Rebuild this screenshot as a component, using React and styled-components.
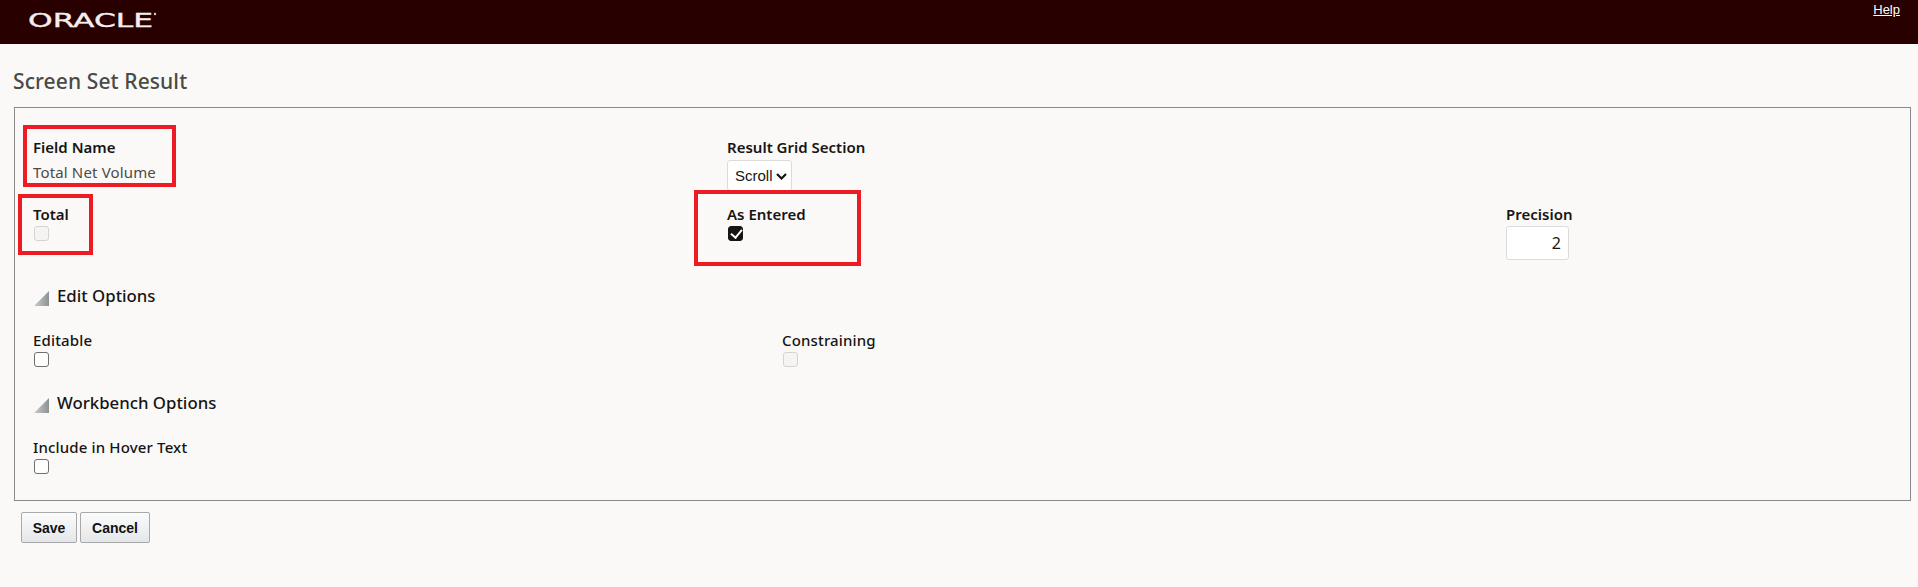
import React from "react";
import styled, { createGlobalStyle } from "styled-components";

const Global = createGlobalStyle`
  html, body { margin: 0; padding: 0; background: #fbf9f8; }
  body { font-family: "Noto Sans", "Open Sans", sans-serif; color: #161513; }
  * { box-sizing: border-box; }
`;

const Page = styled.div`
  position: relative;
  width: 1918px;
  height: 587px;
  background: #fbf9f8;
  overflow: hidden;
`;

const Header = styled.header`
  height: 44px;
  background: #290000;
  display: flex;
  justify-content: space-between;
  align-items: flex-start;
  padding: 0 18px 0 28px;
`;

const Logo = styled.svg`
  display: block;
  margin-top: 9px;
`;

const HelpLink = styled.a`
  font-family: "Liberation Sans", Arial, sans-serif;
  font-size: 13px;
  line-height: 15px;
  margin-top: 2px;
  color: #fff;
  text-decoration: underline;
`;

const Title = styled.h1`
  margin: 24px 0 0 13px;
  font-size: 21px;
  line-height: 26px;
  font-weight: 500;
  letter-spacing: 0.1px;
  color: #4a4a46;
`;

const Panel = styled.section`
  margin: 13px 7px 0 14px;
  height: 394px;
  border: 1px solid #8a8a8a;
  padding: 29px 18px 0;
`;

const Row = styled.div`
  display: grid;
  grid-template-columns: ${(p) => p.$cols};
  height: ${(p) => p.$h}px;
  padding-top: ${(p) => p.$top || 0}px;
`;

const Field = styled.div`
  display: flex;
  flex-direction: column;
  align-items: flex-start;
`;

const Label = styled.label`
  font-size: 15px;
  line-height: 20px;
  font-weight: ${(p) => (p.$strong ? 600 : 500)};
  letter-spacing: ${(p) => (p.$strong ? 0 : 0.15)}px;
  color: #161513;
`;

const StaticValue = styled.span`
  font-size: 15px;
  line-height: 20px;
  margin-top: 5px;
  letter-spacing: 0.15px;
  color: #4a4a46;
`;

const SelectBox = styled.select`
  appearance: none;
  width: 65px;
  height: 31px;
  margin-top: 3px;
  padding: 0 0 0 7px;
  border: 1px solid #dcdbd9;
  border-radius: 3px;
  background: #fff url("data:image/svg+xml,%3Csvg xmlns='http://www.w3.org/2000/svg' width='11' height='7' viewBox='0 0 11 7'%3E%3Cpath d='M1 1l4.5 4.5L10 1' fill='none' stroke='%23161513' stroke-width='2.2'/%3E%3C/svg%3E") no-repeat 48px 12px;
  color: #161513;
  font-family: "Liberation Sans", Arial, sans-serif;
  font-size: 15px;
`;

const CheckBox = styled.input.attrs({ type: "checkbox" })`
  appearance: none;
  position: relative;
  width: 15px;
  height: 15px;
  margin: 2px 0 0 1px;
  border-radius: 3px;
  border: 1px solid ${(p) => (p.disabled ? "#d5d4d2" : "#706f6c")};
  background: ${(p) => (p.disabled ? "#f5f4f2" : "#fff")};
  &:checked { background: #161513; border-color: #161513; }
  &:checked::after {
    content: "";
    position: absolute;
    left: 4px;
    top: 0px;
    width: 5px;
    height: 9px;
    border: solid #fff;
    border-width: 0 2.5px 2.5px 0;
    transform: rotate(40deg);
  }
`;

const NumberInput = styled.input`
  width: 63px;
  height: 34px;
  margin-top: 2px;
  padding: 0 7px 0 0;
  border: 1px solid #dcdbd9;
  border-radius: 3px;
  background: #fff;
  color: #161513;
  text-align: right;
  font-family: "Noto Sans", sans-serif;
  font-size: 16px;
`;

const SectionHead = styled.div`
  display: flex;
  align-items: center;
  gap: 8px;
  height: 24px;
  margin-left: 1px;
`;

const SectionTitle = styled.span`
  font-size: 16.8px;
  line-height: 24px;
  font-weight: 500;
  color: #161513;
`;

const ButtonBar = styled.div`
  display: flex;
  gap: 3px;
  margin: 11px 0 0 21px;
`;

const Button = styled.button`
  height: 31px;
  width: ${(p) => p.$w}px;
  padding: 0;
  border: 1px solid #a8a8a8;
  border-radius: 2px;
  background: linear-gradient(#fbfbfb, #e4e7ea);
  color: #111;
  font-family: "Liberation Sans", Arial, sans-serif;
  font-size: 14px;
  font-weight: 700;
`;

const Callout = styled.div`
  position: absolute;
  left: ${(p) => p.$x}px;
  top: ${(p) => p.$y}px;
  width: ${(p) => p.$w}px;
  height: ${(p) => p.$h}px;
  border: 4px solid #ed1c24;
  pointer-events: none;
`;

const Triangle = () => (
  <svg width="15" height="15" viewBox="0 0 15 15" style={{ marginTop: 5 }}>
    <defs>
      <linearGradient id="tri" x1="0" y1="0" x2="1" y2="0">
        <stop offset="0" stopColor="#c9cbcc" />
        <stop offset="1" stopColor="#8f9294" />
      </linearGradient>
    </defs>
    <polygon points="0,15 15,0 15,15" fill="url(#tri)" />
  </svg>
);

export default function App() {
  return (
    <Page>
      <Global />
      <Header>
        <Logo width="132" height="22" viewBox="0 0 132 22">
          <text x="0" y="18" fill="#f4eeee" stroke="#f4eeee" strokeWidth="0.4" fontFamily="DejaVu Sans, sans-serif" fontSize="20" textLength="125" lengthAdjust="spacingAndGlyphs">ORACLE</text>
          <circle cx="127" cy="5" r="1.2" fill="#d8cccc" />
        </Logo>
        <HelpLink href="#">Help</HelpLink>
      </Header>
      <Title>Screen Set Result</Title>
      <Panel>
        <Row $cols="694px 1fr" $h={67}>
          <Field>
            <Label $strong>Field Name</Label>
            <StaticValue>Total Net Volume</StaticValue>
          </Field>
          <Field>
            <Label $strong>Result Grid Section</Label>
            <SelectBox defaultValue="Scroll"><option>Scroll</option></SelectBox>
          </Field>
        </Row>
        <Row $cols="694px 779px 1fr" $h={80}>
          <Field>
            <Label $strong>Total</Label>
            <CheckBox disabled />
          </Field>
          <Field>
            <Label $strong>As Entered</Label>
            <CheckBox defaultChecked />
          </Field>
          <Field>
            <Label $strong>Precision</Label>
            <NumberInput defaultValue="2" />
          </Field>
        </Row>
        <SectionHead><Triangle /><SectionTitle>Edit Options</SectionTitle></SectionHead>
        <Row $cols="749px 1fr" $h={83} $top={22}>
          <Field>
            <Label>Editable</Label>
            <CheckBox />
          </Field>
          <Field>
            <Label>Constraining</Label>
            <CheckBox disabled />
          </Field>
        </Row>
        <SectionHead><Triangle /><SectionTitle>Workbench Options</SectionTitle></SectionHead>
        <Row $cols="1fr" $h={83} $top={22}>
          <Field>
            <Label>Include in Hover Text</Label>
            <CheckBox />
          </Field>
        </Row>
      </Panel>
      <ButtonBar>
        <Button $w={56}>Save</Button>
        <Button $w={70}>Cancel</Button>
      </ButtonBar>
      <Callout $x={23} $y={125} $w={153} $h={62} />
      <Callout $x={18} $y={194} $w={75} $h={61} />
      <Callout $x={694} $y={190} $w={167} $h={76} />
    </Page>
  );
}
